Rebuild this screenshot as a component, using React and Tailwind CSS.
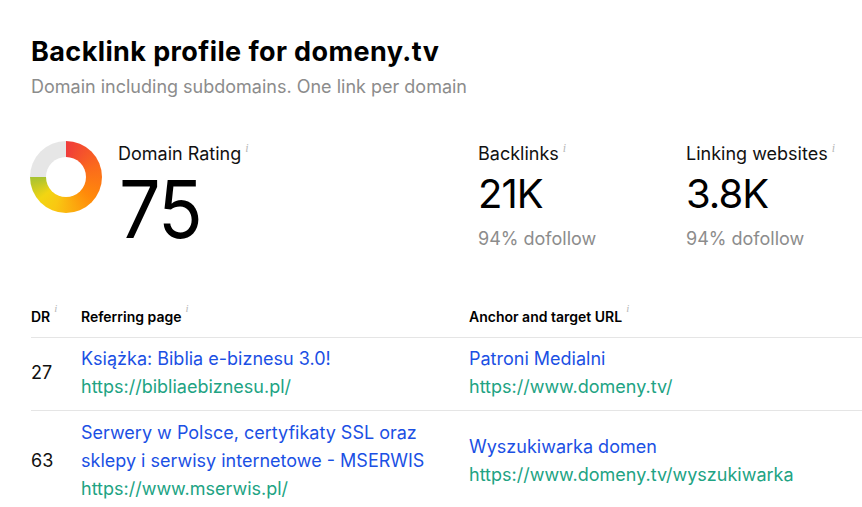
import React from 'react';

const rows = [
  {
    dr: 27,
    title: ['Książka: Biblia e-biznesu 3.0!'],
    url: 'https://bibliaebiznesu.pl/',
    anchor: 'Patroni Medialni',
    target: 'https://www.domeny.tv/',
  },
  {
    dr: 63,
    title: ['Serwery w Polsce, certyfikaty SSL oraz', 'sklepy i serwisy internetowe - MSERWIS'],
    url: 'https://www.mserwis.pl/',
    anchor: 'Wyszukiwarka domen',
    target: 'https://www.domeny.tv/wyszukiwarka',
  },
];

function Info({ className = '' }) {
  return (
    <span className={`ml-[4px] font-['Liberation_Serif',serif] italic font-normal text-[#b8b8b8] leading-none align-top ${className}`}>i</span>
  );
}

function Donut() {
  return (
    <div className="relative w-[72px] h-[72px] rounded-full bg-[conic-gradient(#ef3b3b_0deg,#fb6a1c_70deg,#ff8a0a_130deg,#f9c812_200deg,#f2d512_230deg,#a6c232_270deg,#e6e6e6_270deg,#e6e6e6_360deg)]">
      <div className="absolute left-[16px] top-[16px] w-[40px] h-[40px] rounded-full bg-white" />
    </div>
  );
}

export default function App() {
  return (
    <div className="w-[862px] h-[507px] overflow-hidden bg-white pl-[31px] pt-[36px] font-['Inter',sans-serif] text-[#111]">
      <h1 className="text-[27px] leading-[32px] font-bold tracking-[0.4px] text-black">Backlink profile for domeny.tv</h1>
      <p className="mt-[7px] text-[18px] leading-[24px] text-[#8c8c8c]">Domain including subdomains. One link per domain</p>

      {/* stats */}
      <div className="mt-[43px] flex items-start">
        <div className="flex w-[447px] items-start">
          <div className="-ml-[1px] -mt-[1px]">
            <Donut />
          </div>
          <div className="ml-[16px]">
            <div className="text-[18px] leading-[24px] text-[#111]">Domain Rating<Info className="text-[12px]" /></div>
            <div className="mt-[3px] ml-[1px] origin-left scale-x-[0.92] text-[80px] leading-[80px] tracking-[-2px] text-black">75</div>
          </div>
        </div>
        <div className="w-[208px]">
          <div className="text-[18px] leading-[24px]">Backlinks<Info className="text-[12px]" /></div>
          <div className="mt-[4px] text-[40px] leading-[48px] tracking-[-1px] text-black">21K</div>
          <div className="mt-[9px] text-[18px] leading-[24px] text-[#8c8c8c]">94% dofollow</div>
        </div>
        <div>
          <div className="text-[18px] leading-[24px]">Linking websites<Info className="text-[12px]" /></div>
          <div className="mt-[4px] text-[40px] leading-[48px] tracking-[-1px] text-black">3.8K</div>
          <div className="mt-[9px] text-[18px] leading-[24px] text-[#8c8c8c]">94% dofollow</div>
        </div>
      </div>

      {/* table */}
      <div className="mt-[52px]">
        <div className="flex leading-[28px] pb-[6px] text-[14px] font-semibold text-black border-b border-[#e5e5e5]">
          <div className="w-[50px]">DR<Info className="text-[11px]" /></div>
          <div className="w-[388px]">Referring page<Info className="text-[11px]" /></div>
          <div>Anchor and target URL<Info className="text-[11px]" /></div>
        </div>
        {rows.map((r, i) => (
          <div
            key={r.dr}
            className={`flex items-center ${i === 0 ? 'pt-[7px]' : 'pt-[8px]'} pb-[9px] border-b border-[#e5e5e5] text-[18px] leading-[28px]`}
          >
            <div className="w-[50px] text-[#111]">{r.dr}</div>
            <div className="w-[388px]">
              {r.title.map((t) => (
                <div key={t} className="text-[#1b50e4]">{t}</div>
              ))}
              <div className="text-[#21a383]">{r.url}</div>
            </div>
            <div>
              <div className="text-[#1b50e4]">{r.anchor}</div>
              <div className="text-[#21a383]">{r.target}</div>
            </div>
          </div>
        ))}
      </div>
    </div>
  );
}
